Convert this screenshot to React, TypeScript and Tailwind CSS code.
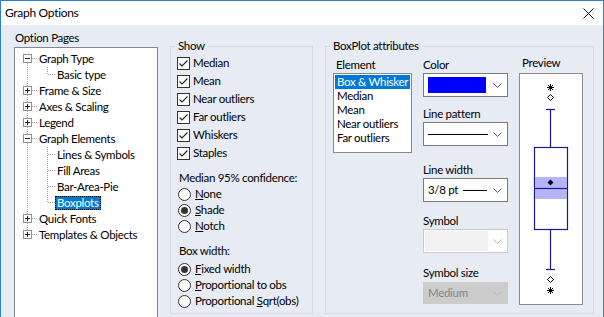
import type { ReactNode } from "react";

type Row = {
  label: string;
  level: 0 | 1;
  exp?: "minus" | "plus";
  root: "first" | "mid" | "last";
  child?: "mid" | "last";
  selected?: boolean;
};

const treeRows: Row[] = [
  { label: "Graph Type", level: 0, exp: "minus", root: "first" },
  { label: "Basic type", level: 1, root: "mid", child: "last" },
  { label: "Frame & Size", level: 0, exp: "plus", root: "mid" },
  { label: "Axes & Scaling", level: 0, exp: "plus", root: "mid" },
  { label: "Legend", level: 0, exp: "plus", root: "mid" },
  { label: "Graph Elements", level: 0, exp: "minus", root: "mid" },
  { label: "Lines & Symbols", level: 1, root: "mid", child: "mid" },
  { label: "Fill Areas", level: 1, root: "mid", child: "mid" },
  { label: "Bar-Area-Pie", level: 1, root: "mid", child: "mid" },
  { label: "Boxplots", level: 1, root: "mid", child: "last", selected: true },
  { label: "Quick Fonts", level: 0, exp: "plus", root: "mid" },
  { label: "Templates & Objects", level: 0, exp: "plus", root: "last" },
];

const DOT = "#a0a0a0";

const TreeLines = ({ row }: { row: Row }) => {
  const w = row.level === 0 ? 24 : 42;
  return (
    <svg width={w} height={16} className="shrink-0" shapeRendering="crispEdges">
      {row.level === 0 ? (
        <>
          {row.root !== "first" && <line x1="12.5" y1="0" x2="12.5" y2="3" stroke={DOT} strokeDasharray="1 1" />}
          {row.root !== "last" && <line x1="12.5" y1="12" x2="12.5" y2="16" stroke={DOT} strokeDasharray="1 1" />}
          <line x1="17" y1="7.5" x2="23" y2="7.5" stroke={DOT} strokeDasharray="1 1" />
          <rect x="8.5" y="3.5" width="8" height="8" fill="white" stroke="#919191" />
          <line x1="10" y1="7.5" x2="15" y2="7.5" stroke="#222" />
          {row.exp === "plus" && <line x1="12.5" y1="5" x2="12.5" y2="10" stroke="#222" />}
        </>
      ) : (
        <>
          <line x1="12.5" y1="0" x2="12.5" y2="16" stroke={DOT} strokeDasharray="1 1" />
          <line x1="32.5" y1="0" x2="32.5" y2={row.child === "last" ? 8 : 16} stroke={DOT} strokeDasharray="1 1" />
          <line x1="33" y1="7.5" x2="40" y2="7.5" stroke={DOT} strokeDasharray="1 1" />
        </>
      )}
    </svg>
  );
};

const Checkbox = ({ label }: { label: string }) => (
  <div className="flex h-[18px] items-center">
    <span className="flex h-[13px] w-[13px] items-center justify-center border border-[#333] bg-white">
      <svg width="11" height="11" viewBox="0 0 11 11">
        <polyline points="1.5,5.5 4,8 9.5,2.5" fill="none" stroke="#222" strokeWidth="1.1" />
      </svg>
    </span>
    <span className="ml-[3px]">{label}</span>
  </div>
);

const Radio = ({ checked, children }: { checked?: boolean; children: ReactNode }) => (
  <div className="flex h-[16px] items-center pl-[1px]">
    <span className="flex h-[13px] w-[13px] items-center justify-center rounded-full border border-[#333] bg-white">
      {checked && <span className="h-[7px] w-[7px] rounded-full bg-[#333]" />}
    </span>
    <span className="ml-[4px] whitespace-nowrap">{children}</span>
  </div>
);

const Chevron = ({ color }: { color: string }) => (
  <svg width="9" height="5" viewBox="0 0 9 5" className="shrink-0">
    <polyline points="0.5,0.5 4.5,4.5 8.5,0.5" fill="none" stroke={color} strokeWidth="1" />
  </svg>
);

const Combo = ({ children, disabled, gray }: { children?: ReactNode; disabled?: boolean; gray?: boolean }) => (
  <div
    className={
      gray
        ? "flex h-[22px] w-[85px] items-center justify-between border border-[#cccccc] bg-[#cccccc] pl-[4px] pr-[5px]"
        : disabled
          ? "flex h-[24px] w-[85px] items-center justify-between border border-[#cccccc] bg-white pl-[1px] pr-[5px]"
          : "flex h-[24px] w-[85px] items-center justify-between border border-[#7a7a7a] bg-white pl-[4px] pr-[5px]"
    }
  >
    {children ?? <span />}
    <Chevron color={gray || disabled ? "#b8b8b8" : "#555"} />
  </div>
);

const NAVY = "#1a1a96";

const Star = ({ y }: { y: number }) => (
  <g stroke="#000" strokeWidth="1">
    <line x1="27" y1={y} x2="34" y2={y} />
    <line x1="30.5" y1={y - 3.5} x2="30.5" y2={y + 3.5} />
    <line x1="28" y1={y - 2.5} x2="33" y2={y + 2.5} />
    <line x1="33" y1={y - 2.5} x2="28" y2={y + 2.5} />
  </g>
);

const OpenDiamond = ({ y }: { y: number }) => (
  <polygon points={`30.5,${y - 3} 33.5,${y} 30.5,${y + 3} 27.5,${y}`} fill="white" stroke="#000" strokeWidth="1" />
);

const Preview = () => (
  <div className="mt-[2px] h-[232px] w-[64px] border border-[#8c8c8c] bg-white">
    <svg width="62" height="230" viewBox="0 0 62 230">
      <Star y={13.5} />
      <OpenDiamond y={23.5} />
      <line x1="26" y1="35.5" x2="35" y2="35.5" stroke={NAVY} strokeWidth="1.2" />
      <line x1="30.5" y1="35.5" x2="30.5" y2="73.5" stroke={NAVY} strokeWidth="1.2" />
      <rect x="14.5" y="73.5" width="33" height="82" fill="white" stroke={NAVY} strokeWidth="1.2" />
      <rect x="15" y="103" width="32" height="22" fill="#b4b4f7" />
      <line x1="15" y1="114.5" x2="47" y2="114.5" stroke={NAVY} strokeWidth="1.2" />
      <polygon points="30.5,105.5 33.5,108.5 30.5,111.5 27.5,108.5" fill="#000" />
      <line x1="30.5" y1="155.5" x2="30.5" y2="195.5" stroke={NAVY} strokeWidth="1.2" />
      <line x1="26" y1="195.5" x2="35" y2="195.5" stroke={NAVY} strokeWidth="1.2" />
      <OpenDiamond y={205.5} />
      <Star y={216.5} />
    </svg>
  </div>
);

const elements = ["Box & Whisker", "Median", "Mean", "Near outliers", "Far outliers"];

export default function App() {
  return (
    <div className="h-[317px] w-[604px] overflow-hidden border-x border-t border-[#2f7fd0] bg-[#e6ebf4] font-['Lato',sans-serif] text-[11.5px] leading-[16px] tracking-[-0.3px] text-black">
      {/* Title bar */}
      <div className="flex h-[24px] items-center justify-between bg-white pl-[4px] pr-[9px]">
        <span className="text-[12px]">Graph Options</span>
        <svg width="11" height="11" viewBox="0 0 11 11">
          <line x1="0.5" y1="0.5" x2="10.5" y2="10.5" stroke="#111" strokeWidth="1" />
          <line x1="10.5" y1="0.5" x2="0.5" y2="10.5" stroke="#111" strokeWidth="1" />
        </svg>
      </div>

      <div className="flex">
        {/* Option pages */}
        <div className="ml-[13px] w-[144px] pt-[5px]">
          <div className="pl-[1px]">Option Pages</div>
          <div className="mt-[1px] h-[280px] border border-[#828790] bg-white pt-[3px]">
            {treeRows.map((row) => (
              <div key={row.label} className="flex h-[16px] items-center whitespace-nowrap">
                <TreeLines row={row} />
                {row.selected ? (
                  <span className="-ml-[2px] border border-dotted border-black bg-[#0078d7] px-[1px] leading-[12px] text-white">
                    {row.label}
                  </span>
                ) : (
                  <span>{row.label}</span>
                )}
              </div>
            ))}
          </div>
        </div>

        {/* Show */}
        <fieldset className="ml-[12px] mt-[13px] h-[276px] w-[143px] border border-[#d3d9e2]">
          <legend className="ml-[4px] px-[3px] leading-[16px]">Show</legend>
          <div className="pl-[6px]">
            {["Median", "Mean", "Near outliers", "Far outliers", "Whiskers", "Staples"].map((s) => (
              <Checkbox key={s} label={s} />
            ))}
            <div className="mt-[8px] pl-[2px]">Median 95% confidence:</div>
            <Radio>
              <u>N</u>one
            </Radio>
            <Radio checked>
              <u>S</u>hade
            </Radio>
            <Radio>
              <u>N</u>otch
            </Radio>
            <div className="mt-[9px] pl-[2px]">Box width:</div>
            <div className="mt-[2px]">
              <Radio checked>
                <u>F</u>ixed width
              </Radio>
              <Radio>
                <u>P</u>roportional to obs
              </Radio>
              <Radio>
                Proportional <u>S</u>qrt(obs)
              </Radio>
            </div>
          </div>
        </fieldset>

        {/* BoxPlot attributes */}
        <fieldset className="ml-[12px] mt-[13px] h-[276px] w-[269px] border border-[#d3d9e2]">
          <legend className="ml-[4px] px-[3px] leading-[16px]">BoxPlot attributes</legend>
          <div className="flex pl-[7px]">
            <div className="w-[79px] pt-[3px]">
              <div className="pl-[3px]">Element</div>
              <div className="h-[80px] border border-[#828790] bg-white p-[1px]">
                {elements.map((e, i) => (
                  <div
                    key={e}
                    className={
                      i === 0
                        ? "h-[14px] whitespace-nowrap bg-[#0078d7] pl-[2px] leading-[14px] text-white"
                        : "h-[14px] whitespace-nowrap pl-[2px] leading-[14px]"
                    }
                  >
                    {e}
                  </div>
                ))}
              </div>
            </div>

            <div className="ml-[11px] w-[85px] pt-[3px]">
              <div>Color</div>
              <Combo>
                <span className="h-[16px] w-[58px] bg-[#0000ff]" />
              </Combo>
              <div className="mt-[9px]">Line pattern</div>
              <Combo>
                <span className="h-[1px] w-[60px] bg-black" />
              </Combo>
              <div className="mt-[16px]">Line width</div>
              <Combo>
                <span className="flex items-center">
                  3/8 pt
                  <span className="ml-[5px] h-[1px] w-[24px] bg-black" />
                </span>
              </Combo>
              <div className="mt-[11px]">Symbol</div>
              <Combo disabled>
                <span className="h-[20px] w-[63px] bg-[#f2f2f2]" />
              </Combo>
              <div className="mt-[12px]">Symbol size</div>
              <div className="mt-[1px]">
                <Combo gray>
                  <span className="text-[#838383]">Medium</span>
                </Combo>
              </div>
            </div>

            <div className="ml-[11px] w-[64px] pt-[1px]">
              <div className="pl-[3px]">Preview</div>
              <Preview />
            </div>
          </div>
        </fieldset>
      </div>
    </div>
  );
}
